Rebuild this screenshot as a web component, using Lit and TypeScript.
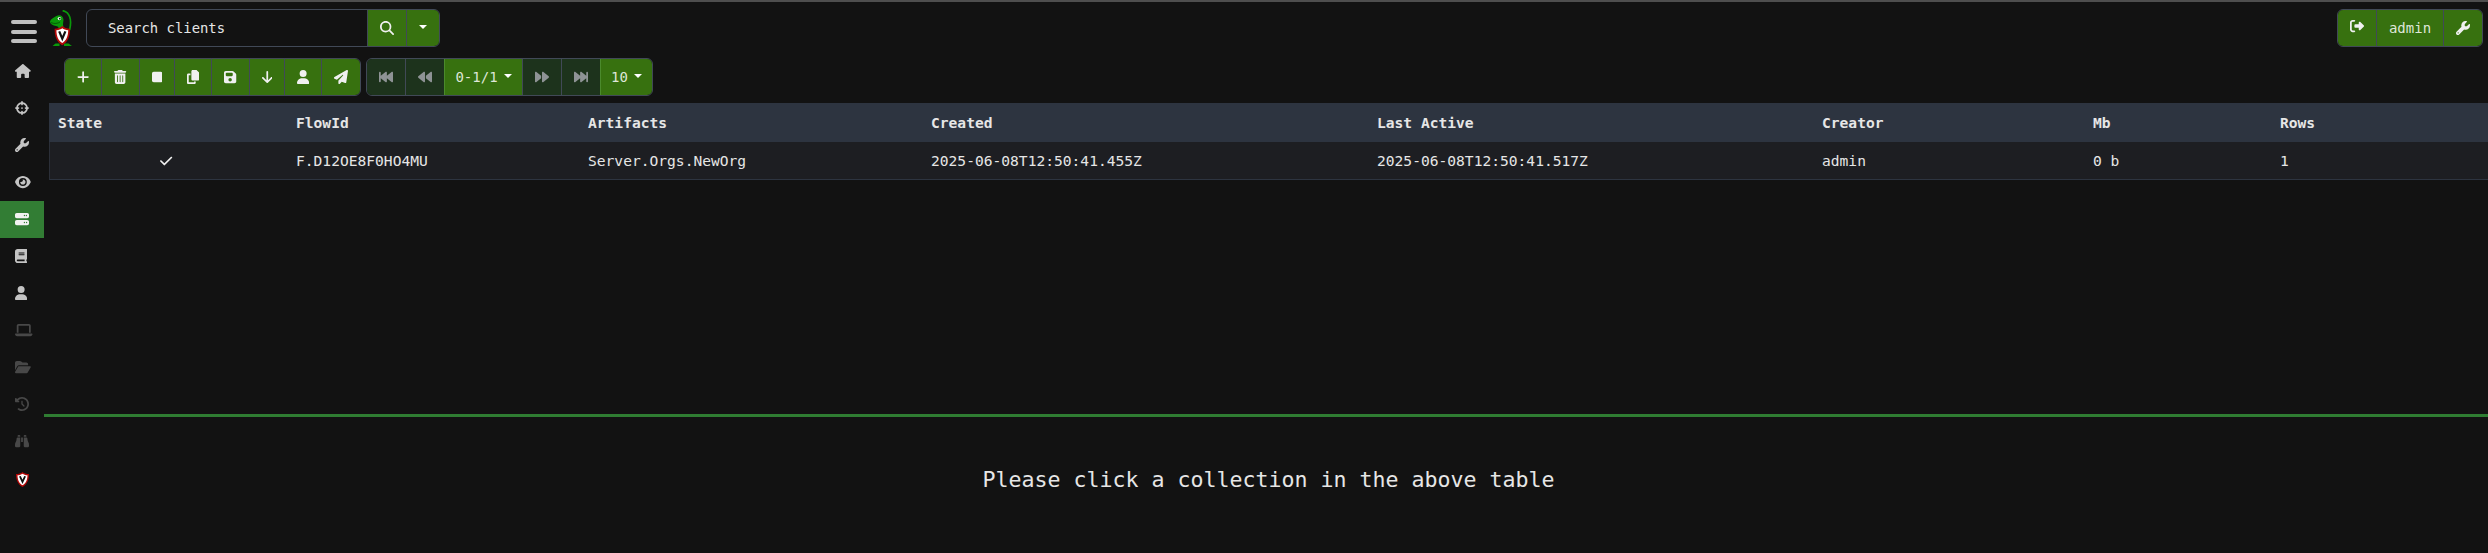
import { LitElement, html, svg, css } from "lit";
import { customElement } from "lit/decorators.js";
import { classMap } from "lit/directives/class-map.js";
import { styleMap } from "lit/directives/style-map.js";

type Glyph = { w: number; d: string };

const WRENCH =
  "M352 320c88.4 0 160-71.6 160-160c0-15.3-2.2-30.1-6.2-44.2c-3.1-10.8-16.4-13.2-24.3-5.3l-76.8 76.8c-3 3-7.1 4.7-11.3 4.7H336c-8.8 0-16-7.2-16-16V118.6c0-4.2 1.7-8.3 4.7-11.3l76.8-76.8c7.9-7.9 5.4-21.2-5.3-24.3C382.1 2.2 367.3 0 352 0C263.6 0 192 71.6 192 160c0 19.1 3.4 37.5 9.5 54.5L19.9 396.1C7.2 408.8 0 426.1 0 444.1C0 481.6 30.4 512 67.9 512c18 0 35.3-7.2 48-19.9L297.5 310.5c17 6.2 35.4 9.5 54.5 9.5zM80 408a24 24 0 1 1 0 48 24 24 0 1 1 0-48z";
const ICONS: Record<string, Glyph> = {
  home: { w: 576, d: "M575.8 255.5c0 18-15 32.1-32 32.1h-32l.7 160.2c0 2.7-.2 5.4-.5 8.1V472c0 22.1-17.9 40-40 40H392c-22.1 0-40-17.9-40-40V384c0-17.7-14.3-32-32-32H256c-17.7 0-32 14.3-32 32v88c0 22.1-17.9 40-40 40H104c-22.1 0-40-17.9-40-40V287.6H32c-18 0-32-14-32-32.1c0-9 3-17 10-24L266.4 8c7-7 15-8 22-8s15 2 21 7L564.8 231.5c8 7 12 15 11 24z" },
  crosshairs: { w: 512, d: "M256 0c17.7 0 32 14.3 32 32V42.4c93.7 13.9 167.7 88 181.6 181.6H480c17.7 0 32 14.3 32 32s-14.3 32-32 32H469.6c-13.9 93.7-88 167.7-181.6 181.6V480c0 17.7-14.3 32-32 32s-32-14.3-32-32V469.6C130.3 455.7 56.3 381.7 42.4 288H32c-17.7 0-32-14.3-32-32s14.3-32 32-32H42.4C56.3 130.3 130.3 56.3 224 42.4V32c0-17.7 14.3-32 32-32zM107.4 288c12.5 58.3 58.4 104.1 116.6 116.6V384c0-17.7 14.3-32 32-32s32 14.3 32 32v20.6c58.3-12.5 104.1-58.4 116.6-116.6H384c-17.7 0-32-14.3-32-32s14.3-32 32-32h20.6C392.1 165.7 346.3 119.9 288 107.4V128c0 17.7-14.3 32-32 32s-32-14.3-32-32V107.4C165.7 119.9 119.9 165.7 107.4 224H128c17.7 0 32 14.3 32 32s-14.3 32-32 32H107.4zM256 224a32 32 0 1 1 0 64 32 32 0 1 1 0-64z" },
  wrench: { w: 512, d: WRENCH },
  eye: { w: 576, d: "M288 32c-80.8 0-145.5 36.8-192.6 80.6C48.6 156 17.3 208 2.5 243.7c-3.3 7.9-3.3 16.7 0 24.6C17.3 304 48.6 356 95.4 399.4C142.5 443.2 207.2 480 288 480s145.5-36.8 192.6-80.6c46.8-43.5 78.1-95.4 93-131.1c3.3-7.9 3.3-16.7 0-24.6c-14.9-35.7-46.2-87.7-93-131.1C433.5 68.8 368.8 32 288 32zM144 256a144 144 0 1 1 288 0 144 144 0 1 1 -288 0zm144-64c0 35.3-28.7 64-64 64c-7.1 0-13.9-1.2-20.3-3.3c-5.5-1.8-11.9 1.6-11.7 7.4c.3 6.9 1.3 13.8 3.2 20.7c13.7 51.2 66.4 81.6 117.6 67.9s81.6-66.4 67.9-117.6c-11.1-41.5-47.8-69.4-88.6-71.1c-5.8-.2-9.2 6.1-7.4 11.7c2.1 6.4 3.3 13.2 3.3 20.3z" },
  server: { w: 512, d: "M64 32C28.7 32 0 60.7 0 96v64c0 35.3 28.7 64 64 64H448c35.3 0 64-28.7 64-64V96c0-35.3-28.7-64-64-64H64zm280 72a24 24 0 1 1 0 48 24 24 0 1 1 0-48zm48 24a24 24 0 1 1 48 0 24 24 0 1 1 -48 0zM64 288c-35.3 0-64 28.7-64 64v64c0 35.3 28.7 64 64 64H448c35.3 0 64-28.7 64-64V352c0-35.3-28.7-64-64-64H64zm280 72a24 24 0 1 1 0 48 24 24 0 1 1 0-48zm56 24a24 24 0 1 1 48 0 24 24 0 1 1 -48 0z" },
  book: { w: 448, d: "M96 0C43 0 0 43 0 96V416c0 53 43 96 96 96H384h32c17.7 0 32-14.3 32-32s-14.3-32-32-32V384c17.7 0 32-14.3 32-32V32c0-17.7-14.3-32-32-32H384 96zm0 384H352v64H96c-17.7 0-32-14.3-32-32s14.3-32 32-32zm32-240c0-8.8 7.2-16 16-16H336c8.8 0 16 7.2 16 16s-7.2 16-16 16H144c-8.8 0-16-7.2-16-16zm16 48H336c8.8 0 16 7.2 16 16s-7.2 16-16 16H144c-8.8 0-16-7.2-16-16s7.2-16 16-16z" },
  user: { w: 448, d: "M224 256A128 128 0 1 0 224 0a128 128 0 1 0 0 256zm-45.7 48C79.8 304 0 383.8 0 482.3C0 498.7 13.3 512 29.7 512H418.3c16.4 0 29.7-13.3 29.7-29.7C448 383.8 368.2 304 269.7 304H178.3z" },
  laptop: { w: 640, d: "M128 32C92.7 32 64 60.7 64 96V352h64V96H512V352h64V96c0-35.3-28.7-64-64-64H128zM19.2 384C8.6 384 0 392.6 0 403.2C0 445.6 34.4 480 76.8 480H563.2c42.4 0 76.8-34.4 76.8-76.8c0-10.6-8.6-19.2-19.2-19.2H19.2z" },
  folder: { w: 576, d: "M88.7 223.8L0 375.8V96C0 60.7 28.7 32 64 32H181.5c17 0 33.3 6.7 45.3 18.7l26.5 26.5c12 12 28.3 18.7 45.3 18.7H416c35.3 0 64 28.7 64 64v32H144c-22.8 0-43.8 12.1-55.3 31.8zm27.6 16.1C122.1 230 132.6 224 144 224H544c11.5 0 22 6.1 27.7 16.1s5.7 22.2-.1 32.1l-112 192C453.9 474 443.4 480 432 480H32c-11.5 0-22-6.1-27.7-16.1s-5.7-22.2 .1-32.1l112-192z" },
  history: { w: 512, d: "M75 75L41 41C25.9 25.9 0 36.6 0 57.9V168c0 13.3 10.7 24 24 24H134.1c21.4 0 32.1-25.9 17-41l-30.8-30.8C155 85.5 203 64 256 64c106 0 192 86 192 192s-86 192-192 192c-40.8 0-78.6-12.7-109.7-34.4c-14.5-10.1-34.4-6.6-44.6 7.9s-6.6 34.4 7.9 44.6C151.2 495 201.7 512 256 512c141.4 0 256-114.6 256-256S397.4 0 256 0C185.3 0 121.3 28.7 75 75zm181 53c-13.3 0-24 10.7-24 24V256c0 6.4 2.5 12.5 7 17l72 72c9.4 9.4 24.6 9.4 33.9 0s9.4-24.6 0-33.9l-65-65V152c0-13.3-10.7-24-24-24z" },
  binoculars: { w: 512, d: "M128 32h32c17.7 0 32 14.3 32 32V96H96V64c0-17.7 14.3-32 32-32zm64 96V448c0 17.7-14.3 32-32 32H32c-17.7 0-32-14.3-32-32V388.9c0-34.6 9.4-68.6 27.2-98.3C40.9 267.8 49.7 242.4 53 216L60.5 156c2-16 15.6-28 31.8-28H192zm227.8 0c16.1 0 29.8 12 31.8 28L459 216c3.3 26.4 12.1 51.8 25.8 74.6c17.8 29.7 27.2 63.7 27.2 98.3V448c0 17.7-14.3 32-32 32H352c-17.7 0-32-14.3-32-32V128h99.8zM320 64c0-17.7 14.3-32 32-32h32c17.7 0 32 14.3 32 32V96H320V64zm-32 64V288H224V128h64z" },
  plus: { w: 448, d: "M256 80c0-17.7-14.3-32-32-32s-32 14.3-32 32V224H48c-17.7 0-32 14.3-32 32s14.3 32 32 32H192V432c0 17.7 14.3 32 32 32s32-14.3 32-32V288H400c17.7 0 32-14.3 32-32s-14.3-32-32-32H256V80z" },
  trash: { w: 448, d: "M135.2 17.7C140.6 6.8 151.7 0 163.8 0H284.2c12.1 0 23.2 6.8 28.6 17.7L320 32h96c17.7 0 32 14.3 32 32s-14.3 32-32 32H32C14.3 96 0 81.7 0 64S14.3 32 32 32h96l7.2-14.3zM32 128H416V448c0 35.3-28.7 64-64 64H96c-35.3 0-64-28.7-64-64V128zm96 64c-8.8 0-16 7.2-16 16V432c0 8.8 7.2 16 16 16s16-7.2 16-16V208c0-8.8-7.2-16-16-16zm96 0c-8.8 0-16 7.2-16 16V432c0 8.8 7.2 16 16 16s16-7.2 16-16V208c0-8.8-7.2-16-16-16zm96 0c-8.8 0-16 7.2-16 16V432c0 8.8 7.2 16 16 16s16-7.2 16-16V208c0-8.8-7.2-16-16-16z" },
  stop: { w: 384, d: "M0 128C0 92.7 28.7 64 64 64H320c35.3 0 64 28.7 64 64V384c0 35.3-28.7 64-64 64H64c-35.3 0-64-28.7-64-64V128z" },
  copy: { w: 448, d: "M208 0H332.1c12.7 0 24.9 5.1 33.9 14.1l67.9 67.9c9 9 14.1 21.2 14.1 33.9V336c0 26.5-21.5 48-48 48H208c-26.5 0-48-21.5-48-48V48c0-26.5 21.5-48 48-48zM48 128h80v64H64V448H256V416h64v48c0 26.5-21.5 48-48 48H48c-26.5 0-48-21.5-48-48V176c0-26.5 21.5-48 48-48z" },
  save: { w: 448, d: "M64 32C28.7 32 0 60.7 0 96V416c0 35.3 28.7 64 64 64H384c35.3 0 64-28.7 64-64V173.3c0-17-6.7-33.3-18.7-45.3L352 50.7C340 38.7 323.7 32 306.7 32H64zm0 96c0-17.7 14.3-32 32-32H288c17.7 0 32 14.3 32 32v64c0 17.7-14.3 32-32 32H96c-17.7 0-32-14.3-32-32V128zM224 288a64 64 0 1 1 0 128 64 64 0 1 1 0-128z" },
  down: { w: 384, d: "M169.4 470.6c12.5 12.5 32.8 12.5 45.3 0l160-160c12.5-12.5 12.5-32.8 0-45.3s-32.8-12.5-45.3 0L224 370.8V64c0-17.7-14.3-32-32-32s-32 14.3-32 32V370.7L54.6 265.4c-12.5-12.5-32.8-12.5-45.3 0s-12.5 32.8 0 45.3l160 160z" },
  plane: { w: 512, d: "M498.1 5.6c10.1 7 15.4 19.1 13.5 31.2l-64 416c-1.5 9.7-7.4 18.2-16 23s-18.9 5.4-28 1.6L284 427.7l-68.5 74.1c-8.9 9.7-22.9 12.9-35.2 8.1S160 493.2 160 480V396.4c0-4 1.5-7.8 4.2-10.7L331.8 202.8c5.8-6.3 5.6-16-.4-22s-15.7-6.4-22-.7L106 360.8 17.7 316.6C7.1 311.3 .3 300.7 0 288.9s5.9-22.8 16.1-28.7l448-256c10.7-6.1 23.9-5.5 34 1.4z" },
  backward: { w: 512, d: "M459.5 440.6c9.5 7.9 22.8 9.7 34.1 4.4s18.4-16.6 18.4-29V96c0-12.4-7.2-23.7-18.4-29s-24.5-3.6-34.1 4.4L288 214.3V297.7L459.5 440.6zM256 352V96c0-12.4-7.2-23.7-18.4-29s-24.5-3.6-34.1 4.4l-192 160C4.2 237.5 0 246.5 0 256s4.2 18.5 11.5 24.6l192 160c9.5 7.9 22.8 9.7 34.1 4.4s18.4-16.6 18.4-29V352z" },
  first: { w: 512, d: "M493.6 445c-11.2 5.3-24.5 3.6-34.1-4.4L288 297.7V416c0 12.4-7.2 23.7-18.4 29s-24.5 3.6-34.1-4.4L64 297.7V416c0 17.7-14.3 32-32 32s-32-14.3-32-32V96C0 78.3 14.3 64 32 64s32 14.3 32 32V214.3L235.5 71.4c9.5-7.9 22.8-9.7 34.1-4.4S288 83.6 288 96V214.3L459.5 71.4c9.5-7.9 22.8-9.7 34.1-4.4S512 83.6 512 96V416c0 12.4-7.2 23.7-18.4 29z" },
  search: { w: 512, d: "M416 208c0 45.9-14.9 88.3-40 122.7L502.6 457.4c12.5 12.5 12.5 32.8 0 45.3s-32.8 12.5-45.3 0L330.7 376c-34.4 25.2-76.8 40-122.7 40C93.1 416 0 322.9 0 208S93.1 0 208 0S416 93.1 416 208zM208 352a144 144 0 1 0 0-288 144 144 0 1 0 0 288z" },
  check: { w: 448, d: "M438.6 105.4c12.5 12.5 12.5 32.8 0 45.3l-256 256c-12.5 12.5-32.8 12.5-45.3 0l-128-128c-12.5-12.5-12.5-32.8 0-45.3s32.8-12.5 45.3 0L160 338.7 393.4 105.4c12.5-12.5 32.8-12.5 45.3 0z" },
  logout: { w: 512, d: "M377.9 105.9L500.7 228.7c7.2 7.2 11.3 17.1 11.3 27.3s-4.1 20.1-11.3 27.3L377.9 406.1c-6.4 6.4-15 9.9-24 9.9c-18.7 0-33.9-15.2-33.9-33.9l0-62.1-128 0c-17.7 0-32-14.3-32-32l0-64c0-17.7 14.3-32 32-32l128 0 0-62.1c0-18.7 15.2-33.9 33.9-33.9c9 0 17.6 3.6 24 9.9zM160 96L96 96c-17.7 0-32 14.3-32 32l0 256c0 17.7 14.3 32 32 32l64 0c17.7 0 32 14.3 32 32s-14.3 32-32 32l-64 0c-53 0-96-43-96-96L0 128C0 75 43 32 96 32l64 0c17.7 0 32 14.3 32 32s-14.3 32-32 32z" },
};

const icon = (name: string, cls = "") => {
  const g = ICONS[name];
  return html`<svg class="icon ${cls}" viewBox="0 0 ${g.w} 512" width=${(g.w * 14) / 512} height="14"><path fill="currentColor" fill-rule="evenodd" d=${g.d} /></svg>`;
};
const caret = html`<span class="caret"></span>`;

/* Shield with the V mark, shared by the logo and the last menu entry. */
const shield = svg`
  <path d="M0 2.6C2.8 2.6 5.4 1.6 7 0C8.6 1.6 11.2 2.6 14 2.6C14 10 12 15.5 7 18.5C2 15.5 0 10 0 2.6z" fill="#b40808"/>
  <path d="M1.6 4.1C4 4 5.8 3.2 7 2.2C8.2 3.2 10 4 12.4 4.1C12.2 9.8 10.8 14 7 16.4C3.2 14 1.8 9.8 1.6 4.1z" fill="#fff"/>
  <path d="M4.2 5.2L7 12.2L9.8 5.2" fill="none" stroke="#111" stroke-width="2"/>`;

const NAV = [
  { icon: "home" }, { icon: "crosshairs" }, { icon: "wrench" }, { icon: "eye" },
  { icon: "server", active: true }, { icon: "book" }, { icon: "user" },
  { icon: "laptop", off: true }, { icon: "folder", off: true },
  { icon: "history", off: true }, { icon: "binoculars", off: true },
];
const ACTIONS: [string, number][] = [
  ["plus", 36], ["trash", 38], ["stop", 35], ["copy", 37],
  ["save", 38], ["down", 35], ["user", 37], ["plane", 39],
];
const COLUMNS: [string, string, number][] = [
  ["State", "", 238], ["FlowId", "F.D12OE8F0HO4MU", 292], ["Artifacts", "Server.Orgs.NewOrg", 343],
  ["Created", "2025-06-08T12:50:41.455Z", 446], ["Last Active", "2025-06-08T12:50:41.517Z", 445],
  ["Creator", "admin", 271], ["Mb", "0 b", 187], ["Rows", "1", 217],
];

@customElement("app-root")
export class AppRoot extends LitElement {
  static styles = css`
    :host { display: block; height: 553px; overflow: hidden; background: #121212; color: #e6e6e6;
      font-family: "DejaVu Sans Mono", "Liberation Mono", monospace; font-size: 14px; }
    * { box-sizing: border-box; }
    .page { display: flex; flex-direction: column; height: 100%; border-top: 2px solid #4e4e4e; }
    .icon { display: block; flex: none; }
    .flip { transform: scaleX(-1); }
    .top { display: flex; height: 51px; padding: 7px 5px 0 11px; align-items: flex-start; }
    .burger { display: flex; flex-direction: column; justify-content: space-between; width: 26px; height: 23px; margin-top: 11px; }
    .burger span { height: 4px; border-radius: 2px; background: #bfbfbf; }
    .logo { display: block; margin: 1px 0 0 13px; }
    .group { display: flex; height: 38px; border: 1px solid #414957; border-radius: 6px; overflow: hidden; }
    .search { margin-left: 14px; }
    .input { width: 280px; padding-left: 21px; line-height: 36px; font-size: 13.9px; }
    .btn { display: flex; flex: none; align-items: center; justify-content: center; background: #37710f; color: #f0f0f0;
      border-left: 1px solid #414957; white-space: nowrap; }
    .btn:first-child { border-left: 0; }
    .btn.off { background: #1d331c; color: #8e9395; }
    .btn.off + .btn:not(.off) { border-left-color: #4b8a2c; }
    .text { color: #dfe6d8; }
    .caret { flex: none; margin-left: 6px; border: 4px solid transparent; border-bottom: 0; border-top-color: #fff; }
    .text .caret { margin-bottom: 2px; }
    .caret:only-child { margin: 0 0 2px; }
    .account { margin-left: auto; }
    .lift { margin-bottom: 4px; }
    .body { display: flex; flex: 1; min-height: 0; }
    .nav { flex: none; width: 44px; }
    .item { display: flex; align-items: center; height: 37px; padding: 0 0 1px 15px; color: #c4c4c4; }
    .item.active { background: #327d34; color: #f2f2f2; }
    .item.off { color: #484848; }
    .item.brand { padding: 1px 0 0 16px; }
    .main { flex: 1; min-width: 0; display: flex; flex-direction: column; }
    .upper { height: 361px; }
    .tools { display: flex; gap: 5px; padding: 5px 0 0 20px; height: 50px; }
    .table { margin-left: 5px; font-size: 14.6px; }
    .row { display: flex; align-items: center; height: 38px; background: #1d1e22; border-left: 1px solid #2b2f38; border-bottom: 1px solid #2d3440; }
    .row.head { height: 39px; background: #2d3440; font-weight: bold; border-color: #2d3440; }
    .cell { flex: none; padding-left: 8px; white-space: nowrap; }
    .tick { display: flex; justify-content: center; padding: 0 5px 0 0; color: #f0f0f0; }
    .lower { flex: 1; border-top: 3px solid #2f7d32; padding: 49px 0 0 5px; text-align: center; font-size: 21.6px; line-height: 28px; }
  `;

  render() {
    return html`<div class="page">
      <div class="top">
        <div class="burger"><span></span><span></span><span></span></div>
        <svg class="logo" width="22" height="36" viewBox="0 0 22 36">
          <path d="M12.6 .6C19.5 2 22.2 9 19.6 20" fill="none" stroke="#0a9a0a" stroke-width="1.7" />
          <path d="M0 11.4C.6 9 3.6 8 6.4 6C9.4 4.2 13 5.6 13.4 9C13.8 12 12 14 14 18L8 20C9 17 8.4 16.6 6 16C3 15.4 .2 14 0 11.4z" fill="#0a9a0a" />
          <path d="M1 12.6C4 14 8 13.6 10 12" fill="none" stroke="#045004" stroke-width=".8" />
          <circle cx="9.4" cy="8.6" r="1.7" fill="#fff" /><circle cx="9.8" cy="8.7" r=".9" fill="#111" />
          <path d="M2.5 36L5.5 33.6H9.5V36zM14 36V33.6H18.5L22 36z" fill="#0a9a0a" />
          <g transform="translate(4.6 16) scale(1.1 1.04)">${shield}</g>
        </svg>
        <div class="group search">
          <div class="input">Search clients</div>
          <div class="btn" style=${styleMap({ width: "39px" })}>${icon("search")}</div>
          <div class="btn" style=${styleMap({ width: "33px" })}>${caret}</div>
        </div>
        <div class="group account">
          <div class="btn" style=${styleMap({ width: "38px" })}>${icon("logout", "lift")}</div>
          <div class="btn text" style=${styleMap({ width: "67px" })}><span>admin</span></div>
          <div class="btn" style=${styleMap({ width: "39px" })}>${icon("wrench")}</div>
        </div>
      </div>
      <div class="body">
        <div class="nav">
          ${NAV.map((n) => html`<div class=${classMap({ item: true, active: !!n.active, off: !!n.off })}>${icon(n.icon)}</div>`)}
          <div class="item brand"><svg class="icon" width="13" height="15" viewBox="0 0 14 18.5" preserveAspectRatio="none">${shield}</svg></div>
        </div>
        <div class="main">
          <div class="upper">
            <div class="tools">
              <div class="group">
                ${ACTIONS.map(([n, w]) => html`<div class="btn" style=${styleMap({ width: w + "px" })}>${icon(n)}</div>`)}
              </div>
              <div class="group">
                <div class="btn off" style=${styleMap({ width: "38px" })}>${icon("first")}</div>
                <div class="btn off" style=${styleMap({ width: "39px" })}>${icon("backward")}</div>
                <div class="btn text" style=${styleMap({ width: "78px" })}><span>0-1/1</span>${caret}</div>
                <div class="btn off" style=${styleMap({ width: "39px" })}>${icon("backward", "flip")}</div>
                <div class="btn off" style=${styleMap({ width: "39px" })}>${icon("first", "flip")}</div>
                <div class="btn text" style=${styleMap({ width: "52px" })}><span>10</span>${caret}</div>
              </div>
            </div>
            <div class="table">
              <div class="row head">${COLUMNS.map(([h, , w]) => html`<div class="cell" style=${styleMap({ width: w + "px" })}>${h}</div>`)}</div>
              <div class="row">${COLUMNS.map(([, v, w]) => v
                ? html`<div class="cell" style=${styleMap({ width: w + "px" })}>${v}</div>`
                : html`<div class="cell tick" style=${styleMap({ width: w + "px" })}>${icon("check")}</div>`)}</div>
            </div>
          </div>
          <div class="lower">Please click a collection in the above table</div>
        </div>
      </div>
    </div>`;
  }
}
